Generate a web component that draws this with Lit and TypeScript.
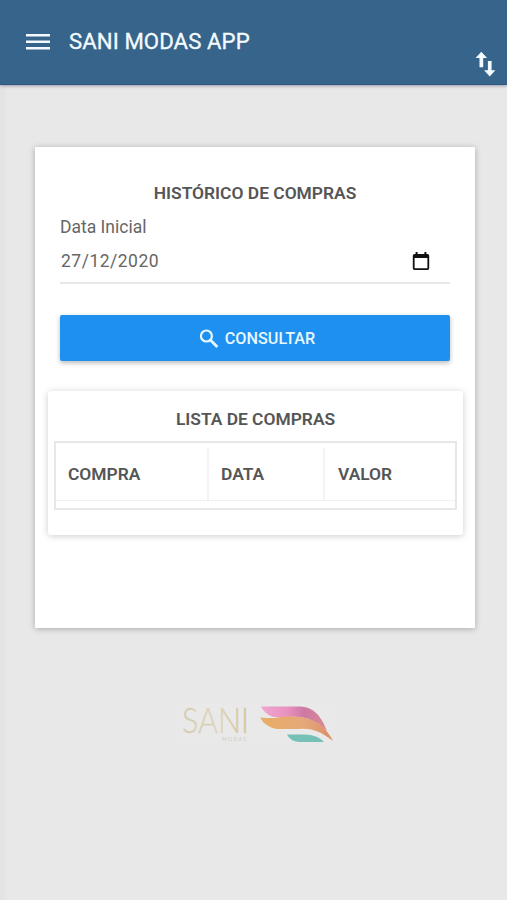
import { LitElement, html, css } from "lit";
import { customElement } from "lit/decorators.js";

@customElement("app-root")
export class AppRoot extends LitElement {
  static styles = css`
    :host {
      display: flex;
      flex-direction: column;
      align-items: center;
      box-sizing: border-box;
      width: 100%;
      height: 900px;
      overflow: hidden;
      background: linear-gradient(90deg, #e3e3e3 0, #e4e4e4 4px, #e8e8e8 7px);
      font-family: Roboto, "Liberation Sans", sans-serif;
      color: #555;
    }
    * {
      box-sizing: border-box;
    }
    svg {
      display: block;
      flex: none;
    }
    header {
      display: flex;
      width: 100%;
      height: 85px;
      flex: none;
      padding: 0 11px 0 26px;
      background: #37648b;
      border-bottom: 1px solid #2f587e;
      box-shadow: 0 1px 3px rgba(60, 60, 90, 0.45);
      color: #f4fbff;
    }
    .menu {
      margin-top: 33px;
    }
    h1 {
      flex: 1;
      margin: 26px 0 0 19px;
      font-size: 22.2px;
      line-height: 30px;
      font-weight: 400;
      letter-spacing: 0.08px;
      -webkit-text-stroke: 0.3px currentColor;
    }
    .swap {
      margin-top: 51px;
    }
    .card {
      display: flex;
      flex-direction: column;
      align-items: center;
      width: 440px;
      height: 481px;
      flex: none;
      margin-top: 62px;
      margin-left: 3px;
      padding-top: 35px;
      background: #fff;
      border-radius: 1px;
      box-shadow: 0 1px 6px rgba(0, 0, 0, 0.27);
    }
    h2 {
      margin: 0;
      font-size: 17.4px;
      line-height: 22px;
      font-weight: 600;
    }
    .field {
      width: 390px;
      height: 68px;
      margin-top: 12px;
      border-bottom: 2px solid #e8e8e8;
      font-size: 17.5px;
      color: #666;
    }
    .label {
      line-height: 22px;
    }
    .value {
      display: flex;
      align-items: center;
      justify-content: space-between;
      height: 22px;
      margin-top: 12px;
      padding: 0 20px 0 1px;
      letter-spacing: 0.5px;
    }
    button {
      display: flex;
      align-items: center;
      justify-content: center;
      width: 390px;
      height: 46px;
      flex: none;
      margin-top: 31px;
      padding: 2px 0 0 4px;
      gap: 6px;
      border: 0;
      border-radius: 2px;
      background: #1e90f0;
      box-shadow: 0 2px 5px rgba(0, 0, 0, 0.28);
      color: #e8f8ff;
      font: 500 16.2px/22px Roboto, sans-serif;
    }
    .list {
      display: flex;
      flex-direction: column;
      align-items: center;
      width: 415px;
      height: 144px;
      margin-top: 30px;
      margin-left: 1px;
      padding-top: 17px;
      border-radius: 3px;
      background: #fff;
      box-shadow: 0 1px 7px rgba(0, 0, 0, 0.2);
    }
    .table {
      width: 403px;
      height: 69px;
      margin-top: 11px;
      border: 2px solid #e7e7e7;
    }
    .row {
      display: grid;
      grid-template-columns: 153px 116px 1fr;
      height: 58px;
      padding-top: 5px;
      border-bottom: 1px solid #f0f0f0;
      font-size: 17.4px;
      font-weight: 600;
      line-height: 52px;
    }
    .cell {
      padding-left: 12px;
      border-right: 2px solid #f3f3f3;
    }
    .cell:last-child {
      padding-left: 13px;
      border-right: 0;
    }
    .logo {
      margin-top: 68px;
      margin-left: 5px;
    }
  `;

  render() {
    return html`
      <header>
        <svg class="menu" width="24" height="18" viewBox="0 0 24 18">
          <path d="M0 1h24v2.4H0zM0 7.6h24V10H0zM0 14h24v2.4H0z" fill="currentColor" />
        </svg>
        <h1>SANI MODAS APP</h1>
        <svg class="swap" width="21" height="26" viewBox="0 0 21 26">
          <path d="M6.3 .8l5.8 6.2H8.2v9.2H4.5V7H.6zM14.7 25.4l-5.6-6.1h3.8V10h3.7v9.3h3.8z" fill="currentColor" />
        </svg>
      </header>
      <main class="card">
        <h2>HISTÓRICO DE COMPRAS</h2>
        <div class="field">
          <div class="label">Data Inicial</div>
          <div class="value">
            <span>27/12/2020</span>
            <svg width="18" height="20" viewBox="0 0 18 20">
              <path d="M3.6 1h2v2h6.8V1h2v2h1.1Q17.2 3 17.2 4.7v12.6Q17.2 19 15.5 19h-13Q.8 19 .8 17.3V4.7Q.8 3 2.5 3h1.1zM2.6 7v10.2h12.8V7z" fill="#111" fill-rule="evenodd" />
            </svg>
          </div>
        </div>
        <button>
          <svg width="20" height="20" viewBox="0 0 20 20">
            <circle cx="7.4" cy="7" r="5.5" fill="none" stroke="currentColor" stroke-width="2.2" />
            <path d="M11.4 11l7 7" stroke="currentColor" stroke-width="2.8" />
          </svg>
          <span>CONSULTAR</span>
        </button>
        <section class="list">
          <h2>LISTA DE COMPRAS</h2>
          <div class="table">
            <div class="row">
              <div class="cell">COMPRA</div>
              <div class="cell">DATA</div>
              <div class="cell">VALOR</div>
            </div>
          </div>
        </section>
      </main>
      <svg class="logo" width="168" height="52" viewBox="172 696 168 52">
        <defs>
          <linearGradient id="gold" x1="0" x2="1">
            <stop offset="0" stop-color="#d3ccb0" />
            <stop offset=".5" stop-color="#ddd6bb" />
            <stop offset="1" stop-color="#d2c39b" />
          </linearGradient>
          <linearGradient id="pink" x1="0" x2="1">
            <stop offset="0" stop-color="#efa6cf" />
            <stop offset=".4" stop-color="#e991bf" />
            <stop offset=".65" stop-color="#cc79a4" />
            <stop offset="1" stop-color="#d98a91" />
          </linearGradient>
          <linearGradient id="orange" x1="0" x2="1">
            <stop offset="0" stop-color="#e9ae66" />
            <stop offset=".6" stop-color="#e5a87a" />
            <stop offset="1" stop-color="#dc8e68" />
          </linearGradient>
        </defs>
        <rect x="174" y="704" width="164" height="38" fill="#e9e9e9" />
        <text x="182" y="733" font-family="Lato" font-weight="300" font-size="35" fill="url(#gold)" stroke="url(#gold)" stroke-width=".4" textLength="67" lengthAdjust="spacingAndGlyphs">SANI</text>
        <text x="222" y="741" font-family="Lato" font-size="5" fill="#d0ccbf" textLength="24">MODAS</text>
        <path d="M261 706.5H300C315 707 322 718 327 731C317 721 306 716 291 717H274Q265 715 261 706.5Z" fill="url(#pink)" />
        <path d="M260 717.5Q265 718 274 718C288 716 300 716 309 719C321 723 328 731 333 741C322 733 314 728 299 729H277Q265 727 260 717.5Z" fill="url(#orange)" />
        <path d="M287 734.5H306Q318 735 324 742H299Q290 741 287 734.5Z" fill="#76c1b7" />
      </svg>
    `;
  }
}
